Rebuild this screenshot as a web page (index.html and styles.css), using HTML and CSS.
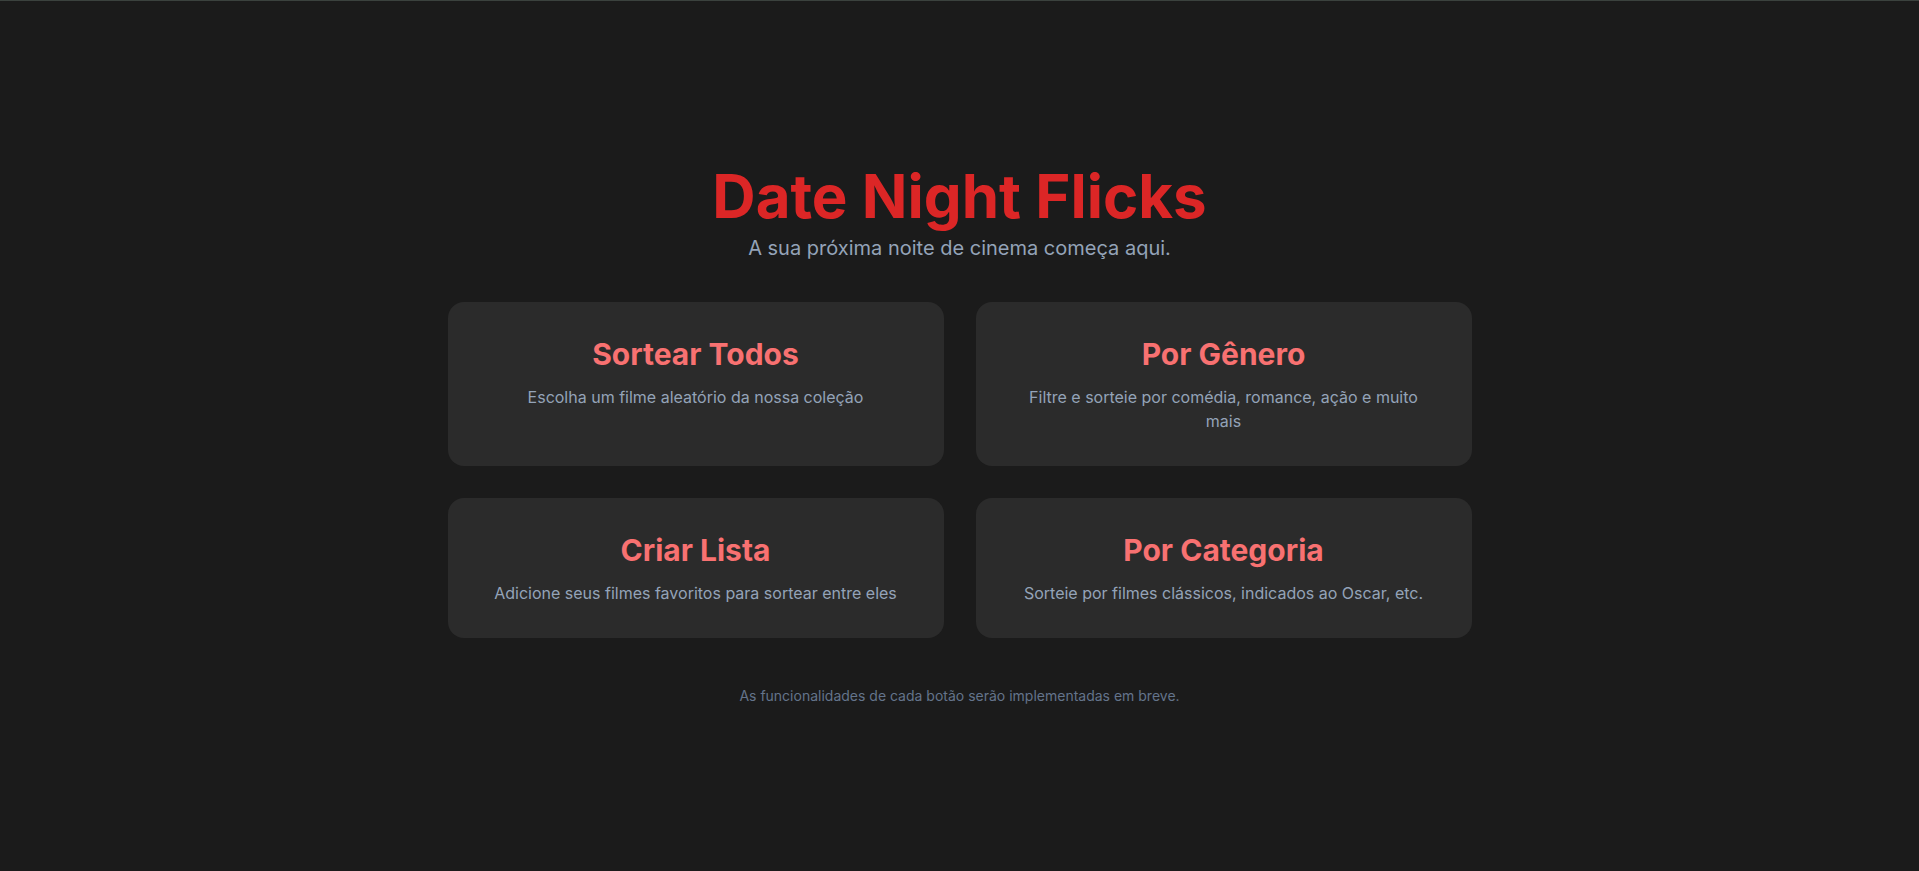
FILE: index.html
```html
<!DOCTYPE html>
<html lang="pt-BR">
<head>
<meta charset="utf-8">
<title>Date Night Flicks</title>
<link rel="stylesheet" href="styles.css">
</head>
<body>
<main class="page">
  <header class="hero">
    <h1 class="hero-title">Date Night Flicks</h1>
    <p class="hero-sub">A sua próxima noite de cinema começa aqui.</p>
  </header>
  <section class="grid">
    <div class="card">
      <h2 class="card-title">Sortear Todos</h2>
      <p class="card-desc">Escolha um filme aleatório da nossa coleção</p>
    </div>
    <div class="card">
      <h2 class="card-title">Por Gênero</h2>
      <p class="card-desc card-desc-narrow">Filtre e sorteie por comédia, romance, ação e muito mais</p>
    </div>
    <div class="card">
      <h2 class="card-title">Criar Lista</h2>
      <p class="card-desc">Adicione seus filmes favoritos para sortear entre eles</p>
    </div>
    <div class="card">
      <h2 class="card-title">Por Categoria</h2>
      <p class="card-desc">Sorteie por filmes clássicos, indicados ao Oscar, etc.</p>
    </div>
  </section>
  <p class="footnote">As funcionalidades de cada botão serão implementadas em breve.</p>
</main>
</body>
</html>
```
FILE: styles.css
```css
* { box-sizing: border-box; }
html, body { margin: 0; padding: 0; }
body {
  background: #1b1b1b;
  border-top: 1px solid #3b423e;
  font-family: "Inter", "Liberation Sans", sans-serif;
  color: #94a3b8;
  min-height: 100vh;
}
.page {
  min-height: calc(100vh - 1px);
  display: flex;
  flex-direction: column;
  align-items: center;
  justify-content: center;
  padding: 0 16px;
}
.hero { text-align: center; margin-bottom: 40px; }
.hero-title {
  margin: 0 0 8px;
  font-size: 60px;
  line-height: 60px;
  font-weight: 700;
  color: #dc2626;
}
.hero-sub {
  margin: 0;
  font-size: 20px;
  line-height: 28px;
  color: #94a3b8;
}
.grid {
  width: 1024px;
  display: grid;
  grid-template-columns: 1fr 1fr;
  gap: 32px;
}
.card {
  background: #2b2b2b;
  border-radius: 16px;
  padding: 34px 32px 33px;
  text-align: center;
}
.card-title {
  margin: 0 0 13px;
  font-size: 30px;
  line-height: 36px;
  font-weight: 700;
  color: #f87171;
}
.card-desc {
  margin: 0 auto;
  font-size: 16px;
  line-height: 24px;
  color: #94a3b8;
}
.card-desc-narrow { max-width: 400px; }
.footnote {
  margin: 48px 0 0;
  font-size: 14px;
  line-height: 20px;
  color: #64748b;
}
```
